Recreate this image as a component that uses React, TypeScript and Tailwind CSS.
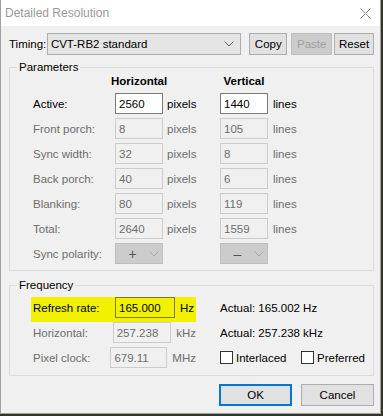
import React from 'react';

const font = "font-['Liberation_Sans',Arial,sans-serif] text-[11.5px] leading-[14px]";

function Chevron({ color = '#6d6d6d' }: { color?: string }) {
  return (
    <svg width="10" height="6" viewBox="0 0 10 6" fill="none">
      <path d="M0.5 0.5 L5 5 L9.5 0.5" stroke={color} strokeWidth="1" />
    </svg>
  );
}

function Field({ value, enabled, width = 'w-[48px]' }: { value: string; enabled?: boolean; width?: string }) {
  return (
    <div
      className={`${width} h-[21px] flex items-center pl-[3px] border ${
        enabled ? 'border-[#7a7a7a] bg-white text-black' : 'border-[#cccccc] bg-[#f0f0f0] text-[#6d6d6d]'
      }`}
    >
      {value}
    </div>
  );
}

function ParamRow({ label, h, v, active }: { label: string; h: string; v: string; active?: boolean }) {
  const muted = active ? 'text-black' : 'text-[#6d6d6d]';
  return (
    <div className="flex items-center h-[21px]">
      <span className={`w-[82px] ${muted}`}>{label}</span>
      <Field value={h} enabled={active} />
      <span className={`w-[57px] pl-[4px] ${muted}`}>pixels</span>
      <Field value={v} enabled={active} />
      <span className={`pl-[5px] ${muted}`}>lines</span>
    </div>
  );
}

function Polarity({ sign }: { sign: string }) {
  return (
    <div className="w-[48px] h-[21px] bg-[#cccccc] border border-[#bfbfbf] flex items-center">
      <span className="w-[33px] text-center text-[#555555] text-[14px]">{sign}</span>
      <Chevron color="#a8a8a8" />
    </div>
  );
}

function Checkbox({ label }: { label: string }) {
  return (
    <div className="flex items-center">
      <div className="w-[13px] h-[13px] border border-[#333333] bg-white" />
      <span className="pl-[3px] text-black">{label}</span>
    </div>
  );
}

export default function App() {
  const params = [
    { label: 'Front porch:', h: '8', v: '105' },
    { label: 'Sync width:', h: '32', v: '8' },
    { label: 'Back porch:', h: '40', v: '6' },
    { label: 'Blanking:', h: '80', v: '119' },
    { label: 'Total:', h: '2640', v: '1559' },
  ];

  return (
    <div className={`w-[383px] h-[416px] bg-[#34342a] ${font}`}>
      <div className="w-[381px] h-[414px] border-x border-b border-[#a0a0a0] bg-[#f0f0f0] flex flex-col">
        {/* Title bar */}
        <div className="h-[26px] bg-white flex items-center justify-between pl-[4px] pr-[9px]">
          <span className="text-[#999999] text-[12px]">Detailed Resolution</span>
          <svg width="11" height="11" viewBox="0 0 11 11">
            <path d="M0.5 0.5 L10.5 10.5 M10.5 0.5 L0.5 10.5" stroke="#8a8a8a" strokeWidth="1" />
          </svg>
        </div>

        <div className="pl-[8px] pt-[7px] w-[373px]">
          {/* Timing row */}
          <div className="flex items-center h-[22px]">
            <span className="w-[38px] text-black">Timing:</span>
            <div className="w-[195px] h-[22px] bg-[#e5e5e5] border border-[#adadad] flex items-center justify-between pl-[3px] pr-[6px]">
              <span className="text-black">CVT-RB2 standard</span>
              <Chevron />
            </div>
            <button className="ml-[8px] w-[38px] h-[22px] bg-[#e1e1e1] border border-[#adadad] text-black">Copy</button>
            <button className="ml-[4px] w-[41px] h-[22px] bg-[#cccccc] border border-[#bfbfbf] text-[#a0a0a0]">Paste</button>
            <button className="ml-[2px] w-[40px] h-[22px] bg-[#e1e1e1] border border-[#adadad] text-black">Reset</button>
          </div>

          {/* Parameters */}
          <fieldset className="mt-[5px] w-[365px] border border-[#dcdcdc] pb-[6px]">
            <legend className="ml-[7px] px-[2px] text-black">Parameters</legend>
            <div className="flex flex-col gap-[4px] pl-[23px]">
              <div className="flex h-[14px] font-bold text-black">
                <span className="w-[82px]" />
                <span className="w-[48px] flex justify-center whitespace-nowrap">Horizontal</span>
                <span className="w-[57px]" />
                <span className="w-[48px] flex justify-center whitespace-nowrap">Vertical</span>
              </div>
              <div className="mt-[1px]">
                <ParamRow label="Active:" h="2560" v="1440" active />
              </div>
              {params.map((p) => (
                <ParamRow key={p.label} label={p.label} h={p.h} v={p.v} />
              ))}
              <div className="flex items-center h-[21px]">
                <span className="w-[82px] text-[#6d6d6d]">Sync polarity:</span>
                <Polarity sign="+" />
                <span className="w-[57px]" />
                <Polarity sign="–" />
              </div>
            </div>
          </fieldset>

          {/* Frequency */}
          <fieldset className="mt-[7px] w-[365px] border border-[#dcdcdc] pt-[5px] pb-[3px]">
            <legend className="ml-[7px] px-[2px] text-black">Frequency</legend>
            <div className="flex flex-col pl-[21px]">
              <div className="flex h-[25px]">
                <div className="w-[165px] h-[25px] bg-[#f2f200] pl-[2px]">
                  <div className="flex items-center h-[21px]">
                    <span className="w-[82px] text-black">Refresh rate:</span>
                    <div className="w-[60px] h-[21px] flex items-center pl-[3px] border border-[#7a7a20] text-black">165.000</div>
                    <span className="pl-[5px] text-black">Hz</span>
                  </div>
                </div>
                <div className="h-[21px] flex items-center pl-[24px] text-black">Actual: 165.002 Hz</div>
              </div>
              <div className="flex h-[25px]">
                <div className="w-[165px] pl-[2px]">
                  <div className="flex items-center h-[21px]">
                    <span className="w-[82px] text-[#6d6d6d]">Horizontal:</span>
                    <Field value="257.238" width="w-[60px]" />
                    <span className="pl-[5px] text-[#6d6d6d]">kHz</span>
                  </div>
                </div>
                <div className="h-[21px] flex items-center pl-[24px] text-black">Actual: 257.238 kHz</div>
              </div>
              <div className="flex h-[25px]">
                <div className="w-[165px] pl-[2px]">
                  <div className="flex items-center h-[21px]">
                    <span className="w-[82px] text-[#6d6d6d]">Pixel clock:</span>
                    <Field value="679.11" width="w-[60px]" />
                    <span className="pl-[5px] text-[#6d6d6d]">MHz</span>
                  </div>
                </div>
                <div className="h-[21px] flex items-center pl-[24px]">
                  <div className="w-[81px]">
                    <Checkbox label="Interlaced" />
                  </div>
                  <Checkbox label="Preferred" />
                </div>
              </div>
            </div>
          </fieldset>

          {/* Buttons */}
          <div className="mt-[8px] w-[365px] flex justify-end gap-[9px]">
            <button className="w-[73px] h-[22px] bg-[#e1e1e1] border-2 border-[#0078d7] text-black">OK</button>
            <button className="w-[73px] h-[22px] bg-[#e1e1e1] border border-[#adadad] text-black">Cancel</button>
          </div>
        </div>
      </div>
    </div>
  );
}
